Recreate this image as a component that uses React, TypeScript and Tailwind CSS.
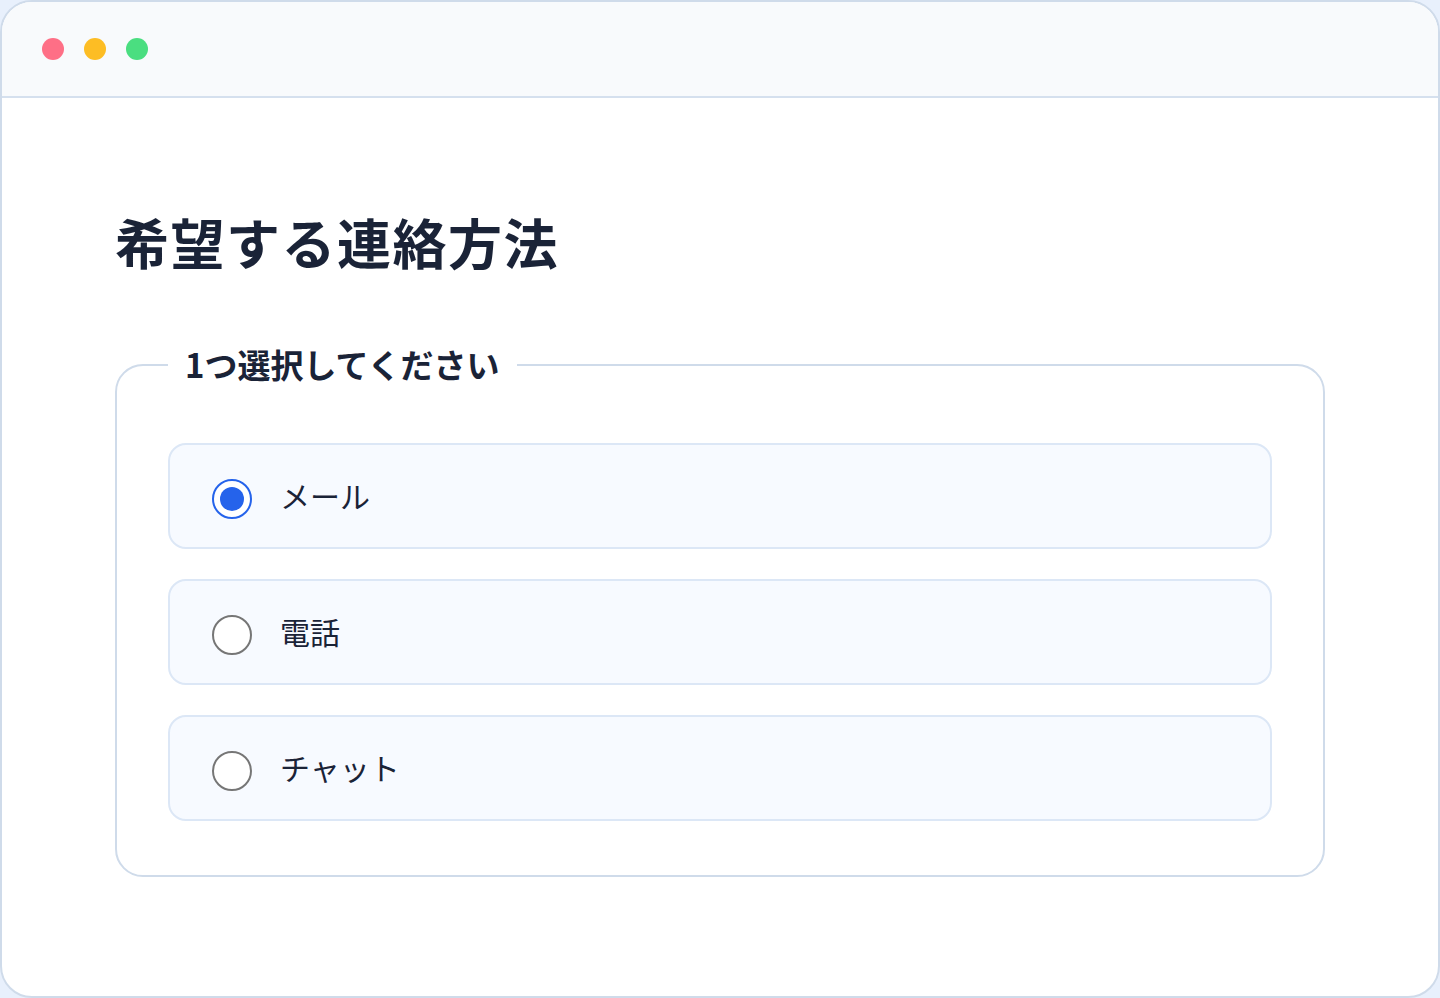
import { useState } from "react";

const options = ["メール", "電話", "チャット"];

export default function App() {
  const [selected, setSelected] = useState("メール");

  return (
    <div
      className="min-h-screen bg-[#e8f0fc]"
      style={{ fontFamily: '"Noto Sans CJK JP", "Noto Sans", sans-serif' }}
    >
      <div className="h-[998px] rounded-[32px] border-2 border-[#cfdbea] bg-white overflow-hidden">
        {/* Window bar */}
        <div className="h-[96px] bg-[#f8fafc] border-b-2 border-[#d5e0ee] flex items-center gap-5 pl-[40px]">
          <span className="w-[22px] h-[22px] rounded-full bg-[#fe6f86]" />
          <span className="w-[22px] h-[22px] rounded-full bg-[#fdbd24]" />
          <span className="w-[22px] h-[22px] rounded-full bg-[#4ade80]" />
        </div>

        {/* Content */}
        <div className="px-[113px] pt-[112px]">
          <h1 className="text-[54px] leading-[1.2] font-bold text-[#1a2337] tracking-[1.5px]">
            希望する連絡方法
          </h1>

          <fieldset className="mt-[71px] border-2 border-[#cfdbea] rounded-[28px] px-[51px] pb-[54px] pt-[59px]">
            <legend className="px-[17px] text-[33px] leading-[1.15] font-bold text-[#1a2337]">
              1つ選択してください
            </legend>
            <div className="flex flex-col gap-[30px]">
              {options.map((opt) => {
                const on = selected === opt;
                return (
                  <label
                    key={opt}
                    className="h-[106px] rounded-[18px] border-2 border-[#dce7f6] bg-[#f7faff] flex items-center pl-[42px] gap-[28px] cursor-pointer"
                  >
                    <input
                      type="radio"
                      name="contact"
                      className="sr-only"
                      checked={on}
                      onChange={() => setSelected(opt)}
                    />
                    {on ? (
                      <span className="mt-[6px] w-10 h-10 rounded-full border-2 border-[#2563eb] bg-white flex items-center justify-center">
                        <span className="w-6 h-6 rounded-full bg-[#2563eb]" />
                      </span>
                    ) : (
                      <span className="mt-[6px] w-10 h-10 rounded-full border-2 border-[#767676] bg-white" />
                    )}
                    <span className="text-[30px] text-[#1a2337]">{opt}</span>
                  </label>
                );
              })}
            </div>
          </fieldset>
        </div>
      </div>
    </div>
  );
}
